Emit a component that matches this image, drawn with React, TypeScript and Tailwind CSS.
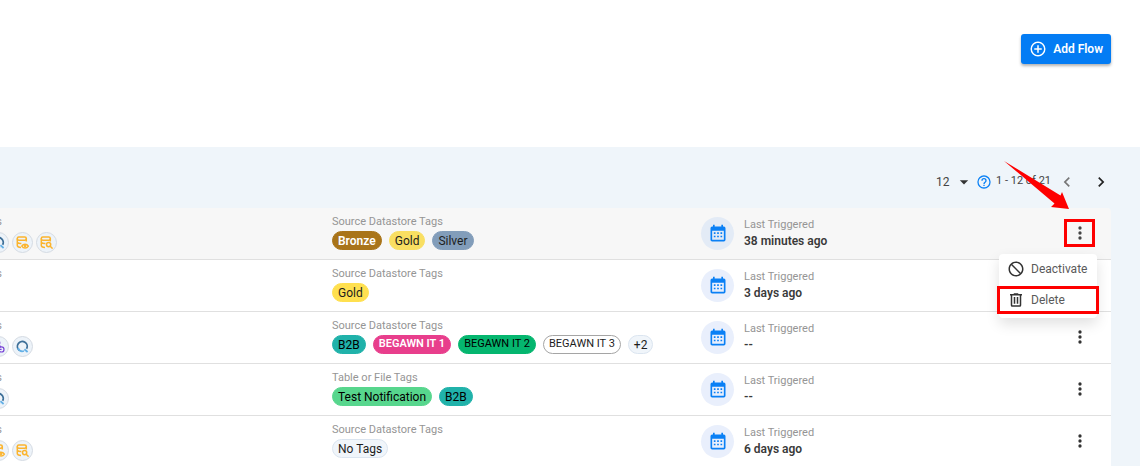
import React from "react";

const paths = {
  plus: "M12,20C7.59,20 4,16.41 4,12C4,7.59 7.59,4 12,4C16.41,4 20,7.59 20,12C20,16.41 16.41,20 12,20M12,2A10,10 0 0,0 2,12A10,10 0 0,0 12,22A10,10 0 0,0 22,12A10,10 0 0,0 12,2M13,7H11V11H7V13H11V17H13V13H17V11H13V7Z",
  help: "M11,18H13V16H11V18M12,2A10,10 0 0,0 2,12A10,10 0 0,0 12,22A10,10 0 0,0 22,12A10,10 0 0,0 12,2M12,20C7.59,20 4,16.41 4,12C4,7.59 7.59,4 12,4C16.41,4 20,7.59 20,12C20,16.41 16.41,20 12,20M12,6A4,4 0 0,0 8,10H10A2,2 0 0,1 12,8A2,2 0 0,1 14,10C14,12 11,11.75 11,15H13C13,12.75 16,12.5 16,10A4,4 0 0,0 12,6Z",
  calendar:
    "M9,10V12H7V10H9M13,10V12H11V10H13M17,10V12H15V10H17M19,3A2,2 0 0,1 21,5V19A2,2 0 0,1 19,21H5C3.89,21 3,20.1 3,19V5A2,2 0 0,1 5,3H6V1H8V3H16V1H18V3H19M19,19V8H5V19H19M9,14V16H7V14H9M13,14V16H11V14H13M17,14V16H15V14H17Z",
  cancel:
    "M12 2C17.5 2 22 6.5 22 12S17.5 22 12 22 2 17.5 2 12 6.5 2 12 2M12 4C10.1 4 8.4 4.6 7.1 5.7L18.3 16.9C19.3 15.5 20 13.8 20 12C20 7.6 16.4 4 12 4M16.9 18.3L5.7 7.1C4.6 8.4 4 10.1 4 12C4 16.4 7.6 20 12 20C13.9 20 15.6 19.4 16.9 18.3Z",
  trash:
    "M9,3V4H4V6H5V19A2,2 0 0,0 7,21H17A2,2 0 0,0 19,19V6H20V4H15V3H9M7,6H17V19H7V6M9,8V17H11V8H9M13,8V17H15V8H13Z",
  dots: "M12,16A2,2 0 0,1 14,18A2,2 0 0,1 12,20A2,2 0 0,1 10,18A2,2 0 0,1 12,16M12,10A2,2 0 0,1 14,12A2,2 0 0,1 12,14A2,2 0 0,1 10,12A2,2 0 0,1 12,10M12,4A2,2 0 0,1 14,6A2,2 0 0,1 12,8A2,2 0 0,1 10,6A2,2 0 0,1 12,4Z",
  left: "M15.41,16.58L10.83,12L15.41,7.41L14,6L8,12L14,18L15.41,16.58Z",
  right: "M8.59,16.58L13.17,12L8.59,7.41L10,6L16,12L10,18L8.59,16.58Z",
  caret: "M7,10L12,15L17,10H7Z",
};

function Icon({ name, className }: { name: keyof typeof paths; className: string }) {
  return (
    <svg viewBox="0 0 24 24" fill="currentColor" aria-hidden="true" className={className}>
      <path d={paths[name]} />
    </svg>
  );
}

type Source = "ring" | "dbEye" | "dbSearch" | "hook";

function SourceIcon({ kind }: { kind: Source }) {
  return (
    <span className="flex size-[21px] shrink-0 items-center justify-center rounded-full border border-[#d5dbe3] bg-[#edf3f9]">
      <svg viewBox="0 0 13 13" fill="none" aria-hidden="true" className="size-[13px]">
        {kind === "ring" && (
          <>
            <path d="M3.2 10.2A4.9 4.9 0 1 1 10.6 8.8" stroke="#3d6f98" strokeWidth="1.8" />
            <path d="M2 8.2A5 5 0 0 0 8 11" stroke="#63b0e6" strokeWidth="1.8" />
            <path d="M8.4 9.2L11.6 12" stroke="#63b0e6" strokeWidth="1.8" />
          </>
        )}
        {(kind === "dbEye" || kind === "dbSearch") && (
          <g stroke="#fbb42e" strokeWidth="1.5">
            <rect x="1.3" y="1" width="9" height="3.2" rx="1.5" />
            <path d="M1.3 2.6V9.6C1.3 10.8 3 11.4 5 11.4M10.3 2.6V5.6M1.3 6.1C1.8 7.2 3.6 7.6 5.4 7.5" />
            {kind === "dbEye" ? (
              <>
                <path d="M5.8 10.1C7.4 7.6 10.8 7.6 12.4 10.1C10.8 12.6 7.4 12.6 5.8 10.1Z" />
                <circle cx="9.1" cy="10.1" r=".5" fill="#fbb42e" />
              </>
            ) : (
              <>
                <circle cx="8.6" cy="8.6" r="2.1" />
                <path d="M10.2 10.2L12.6 12.6" />
              </>
            )}
          </g>
        )}
        {kind === "hook" && (
          <g stroke="#7a45d6" strokeWidth="1.2">
            <circle cx="6" cy="2.8" r="1.8" />
            <path d="M6.8 4.4L8.8 7.4M5 4.4L3.2 8" />
            <circle cx="2.8" cy="9.6" r="1.8" />
            <circle cx="9.4" cy="9.4" r="2.6" />
            <path d="M4.6 9.4H9.6" />
          </g>
        )}
      </svg>
    </span>
  );
}

type Tag = { text: string; style: string };
type Flow = { clipped?: Source; sources: Source[]; label: string; tags: Tag[]; when: string };

const gold = "border-[#ffe04f] bg-[#ffe04f] text-xs text-[#1d1d1d]";
const teal = "border-[#20b2aa] bg-[#20b2aa] text-xs text-black";
const plain = "border-[#dbe5f0] bg-[#f0f5fa] text-xs text-[#1d1d1d]";

const flows: Flow[] = [
  {
    clipped: "ring",
    sources: ["dbEye", "dbSearch"],
    label: "Source Datastore Tags",
    tags: [
      { text: "Bronze", style: "border-[#a97419] bg-[#a97419] text-xs text-white font-semibold" },
      { text: "Gold", style: "border-[#f9df62] bg-[#f9df62] text-xs text-[#1d1d1d]" },
      { text: "Silver", style: "border-[#829dba] bg-[#829dba] text-xs text-[#1d1d1d]" },
    ],
    when: "38 minutes ago",
  },
  { sources: [], label: "Source Datastore Tags", tags: [{ text: "Gold", style: gold }], when: "3 days ago" },
  {
    clipped: "hook",
    sources: ["ring"],
    label: "Source Datastore Tags",
    tags: [
      { text: "B2B", style: teal },
      { text: "BEGAWN IT 1", style: "border-[#e83e8c] bg-[#e83e8c] text-[11px] text-white font-semibold" },
      { text: "BEGAWN IT 2", style: "border-[#05b66f] bg-[#05b66f] text-[11px] text-black" },
      { text: "BEGAWN IT 3", style: "border-[#a5a5a5] bg-white text-[11px] text-[#1d1d1d]" },
      { text: "+2", style: plain },
    ],
    when: "--",
  },
  {
    clipped: "ring",
    sources: [],
    label: "Table or File Tags",
    tags: [
      { text: "Test Notification", style: "border-[#57d68d] bg-[#57d68d] text-xs text-black" },
      { text: "B2B", style: teal },
    ],
    when: "--",
  },
  {
    clipped: "dbEye",
    sources: ["dbSearch"],
    label: "Source Datastore Tags",
    tags: [{ text: "No Tags", style: plain }],
    when: "6 days ago",
  },
];

function ActionMenu() {
  return (
    <div
      role="menu"
      className="absolute top-[46px] right-[14px] flex w-[98px] flex-col rounded-sm bg-white text-xs text-[#5a5a5a] shadow-[0_6px_14px_rgba(0,0,0,0.12)]"
    >
      <button type="button" role="menuitem" className="flex h-8 items-center gap-1.5 pb-0.5 pl-2">
        <Icon name="cancel" className="size-[18px] shrink-0 text-[#333]" />
        Deactivate
      </button>
      <button
        type="button"
        role="menuitem"
        className="-mx-0.5 flex h-7 items-center gap-1.5 border-3 border-[#fe0000] pl-[7px]"
      >
        <Icon name="trash" className="size-[18px] shrink-0 text-[#333]" />
        Delete
      </button>
      <span className="h-1" />
    </div>
  );
}

function CalloutArrow() {
  return (
    <svg viewBox="0 0 66 50" aria-hidden="true" className="pointer-events-none absolute -top-12 right-[41px] h-[50px] w-[66px]">
      <path d="M0 1L56.5 35.5L58 32L65 49L47 47L50.5 43.5Z" fill="#fe0000" />
    </svg>
  );
}

function FlowRow({ flow, active }: { flow: Flow; active: boolean }) {
  return (
    <li
      className={
        active
          ? "relative z-10 flex h-[52px] rounded-tr-sm border-b border-[#e0e0e0] bg-[#f7f7f7]"
          : "flex h-[52px] border-b border-[#e0e0e0] bg-white"
      }
    >
      <div className="flex w-[332px] shrink-0 flex-col pt-1.5">
        <span className="flex w-0.5 justify-end overflow-hidden text-[11px] leading-4 text-[#959595]">s</span>
        <div className="mt-0.5 flex gap-[3px]">
          <span className="flex w-[9px] justify-end overflow-hidden">
            {flow.clipped && <SourceIcon kind={flow.clipped} />}
          </span>
          {flow.sources.map((kind) => (
            <SourceIcon key={kind} kind={kind} />
          ))}
        </div>
      </div>
      <div className="w-[369px] shrink-0 pt-1.5">
        <p className="text-[11px] leading-4 text-[#959595]">{flow.label}</p>
        <div className="mt-px flex gap-[7px]">
          {flow.tags.map((tag) => (
            <span
              key={tag.text}
              className={`flex h-[19px] items-center rounded-full border px-[5px] whitespace-nowrap ${tag.style}`}
            >
              {tag.text}
            </span>
          ))}
        </div>
      </div>
      <div className="flex min-w-0 flex-1 items-start gap-2.5 pt-[9px]">
        <span
          className={
            active
              ? "flex size-[33px] shrink-0 items-center justify-center rounded-full bg-[#e3ebf6]"
              : "flex size-[33px] shrink-0 items-center justify-center rounded-full bg-[#e9effc]"
          }
        >
          <Icon name="calendar" className="size-5 text-[#0a80f5]" />
        </span>
        <div className="whitespace-nowrap">
          <p className="text-[11px] leading-4 text-[#959595]">Last Triggered</p>
          <p className="text-xs leading-4 font-semibold text-[#3a3a3a]">{flow.when}</p>
        </div>
      </div>
      <div className="pt-[11px] pr-4">
        <button
          type="button"
          aria-label="Flow actions"
          className={
            active
              ? "flex h-7 w-[31px] items-center justify-center border-3 border-[#fe0000] text-[#444]"
              : "flex h-7 w-[31px] items-center justify-center text-[#333]"
          }
        >
          <Icon name="dots" className="size-5 shrink-0" />
        </button>
      </div>
      {active && (
        <>
          <CalloutArrow />
          <ActionMenu />
        </>
      )}
    </li>
  );
}

export default function App() {
  return (
    <div className="h-screen overflow-hidden bg-[#eff5fa] font-['Roboto','Liberation_Sans',sans-serif]">
      <header className="flex h-[147px] justify-end bg-white pt-[34px] pr-[29px]">
        <button
          type="button"
          className="flex h-[30px] items-center gap-1.5 rounded-[3px] bg-[#037cf4] px-2 text-xs font-semibold text-white shadow-[0_2px_3px_rgba(0,0,0,0.3)]"
        >
          <Icon name="plus" className="size-[18px]" />
          Add Flow
        </button>
      </header>
      <main className="pr-[29px]">
        <nav aria-label="Pagination" className="flex h-[61px] items-center justify-end pt-2 text-xs text-[#444]">
          <span className="relative flex items-center">
            <select aria-label="Rows per page" defaultValue="12" className="w-9 appearance-none bg-transparent">
              <option>12</option>
              <option>24</option>
            </select>
            <Icon name="caret" className="pointer-events-none absolute -right-0.5 size-5 text-[#333]" />
          </span>
          <Icon name="help" className="ml-1 size-4 text-[#0a80f5]" />
          <span className="ml-1 text-[11px]">1 - 12 of 21</span>
          <button type="button" aria-label="Previous page" className="ml-1.5 text-[#777]">
            <Icon name="left" className="size-5" />
          </button>
          <button type="button" aria-label="Next page" className="ml-3.5 text-[#222]">
            <Icon name="right" className="size-5" />
          </button>
        </nav>
        <ul>
          {flows.map((flow, index) => (
            <FlowRow key={index} flow={flow} active={index === 0} />
          ))}
        </ul>
      </main>
    </div>
  );
}
